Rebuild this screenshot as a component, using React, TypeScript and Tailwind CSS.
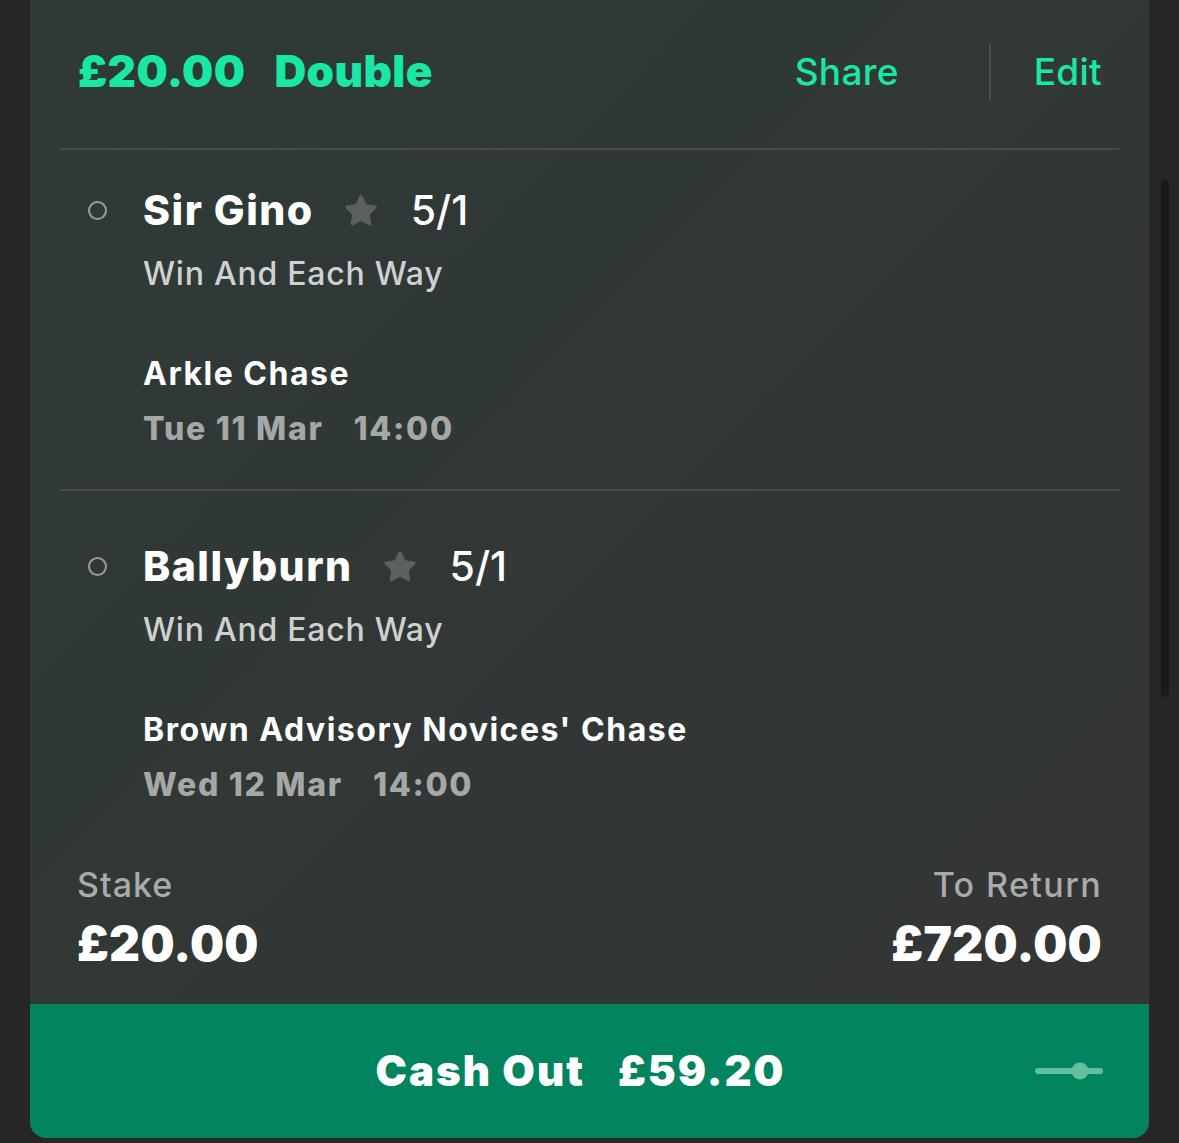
import { Star } from 'lucide-react';

type Leg = {
  horse: string;
  odds: string;
  market: string;
  race: string;
  day: string;
  time: string;
};

const legs: Leg[] = [
  { horse: 'Sir Gino', odds: '5/1', market: 'Win And Each Way', race: 'Arkle Chase', day: 'Tue 11 Mar', time: '14:00' },
  { horse: 'Ballyburn', odds: '5/1', market: 'Win And Each Way', race: "Brown Advisory Novices' Chase", day: 'Wed 12 Mar', time: '14:00' },
];

function LegRow({ leg, first }: { leg: Leg; first: boolean }) {
  return (
    <div className={first ? 'pt-[40px] pb-[44px]' : 'pt-[55px]'}>
      {/* runner line */}
      <div className="flex items-center h-[41px] pl-[58px] leading-none">
        <span className="w-[19px] h-[19px] rounded-full border-2 border-[#999c9b] mr-[36px] shrink-0" />
        <span className="text-[41px] font-extrabold tracking-[1.5px] text-white">{leg.horse}</span>
        <Star className="w-[36px] h-[36px] ml-[29px] text-[#5b615e]" fill="currentColor" strokeWidth={1} />
        <span className="text-[41px] font-medium text-white ml-[32px]">{leg.odds}</span>
      </div>
      <div className="pl-[113px]">
        <div className="mt-[27px] text-[32px] leading-none font-medium tracking-[0.75px] text-[#cfd1d0]">{leg.market}</div>
        <div className="mt-[68px] text-[32px] leading-none font-bold tracking-[1.5px] text-white">{leg.race}</div>
        <div className="mt-[23px] text-[32px] leading-none font-extrabold tracking-[1.7px] text-[#a6a8a7] flex gap-[30px]">
          <span>{leg.day}</span>
          <span>{leg.time}</span>
        </div>
      </div>
    </div>
  );
}

export default function App() {
  return (
    <div className="min-h-screen bg-[#262626] pl-[30px] pb-[6px] relative font-['Inter','Liberation_Sans',sans-serif]">
      <div className="w-[1119px] rounded-b-[16px] overflow-hidden bg-gradient-to-br from-[#2e3a37] to-[#343535]">
        {/* header */}
        <div className="h-[148px] pb-[6px] pl-[48px] pr-[47px] flex items-center justify-between leading-none">
          <div className="flex gap-[29px] text-[44px] font-black tracking-[0.4px] text-[#19e8a4]">
            <span>£20.00</span>
            <span>Double</span>
          </div>
          <div className="flex items-center text-[37px] font-medium tracking-[0.3px] text-[#19e8a4]">
            <span>Share</span>
            <span className="w-[2px] h-[57px] bg-[#4a4e4c] ml-[90px] mr-[43px]" />
            <span>Edit</span>
          </div>
        </div>
        <div className="mx-[30px] h-[2px] bg-[#474c4a]" />

        <LegRow leg={legs[0]} first />
        <div className="mx-[30px] h-[2px] bg-[#474c4a]" />
        <LegRow leg={legs[1]} first={false} />

        {/* stake / return */}
        <div className="pt-[67px] pb-[36px] pl-[47px] pr-[47px] flex justify-between">
          <div>
            <div className="text-[34px] leading-none font-medium tracking-[1px] text-[#a9abaa]">Stake</div>
            <div className="mt-[18px] text-[48px] leading-none font-black tracking-[0.3px] text-white">£20.00</div>
          </div>
          <div className="text-right">
            <div className="text-[34px] leading-none font-medium tracking-[1.4px] text-[#a9abaa]">To Return</div>
            <div className="mt-[18px] text-[48px] leading-none font-black tracking-[0.3px] text-white">£720.00</div>
          </div>
        </div>

        {/* cash out */}
        <div className="h-[134px] bg-[#02855e] flex items-center pl-[48px] pr-[46px]">
          <div className="flex-1 flex justify-center gap-[33px] text-[42px] leading-none font-black tracking-[2px] text-white pl-[48px]">
            <span>Cash Out</span>
            <span>£59.20</span>
          </div>
          <svg width="68" height="20" viewBox="0 0 68 20">
            <line x1="3" y1="10" x2="65" y2="10" stroke="#62c09e" strokeWidth="6" strokeLinecap="round" />
            <circle cx="45" cy="10" r="8.5" fill="#62c09e" />
          </svg>
        </div>
      </div>

      {/* scrollbar thumb */}
      <div className="absolute left-[1161px] top-[180px] w-[8px] h-[517px] rounded-full bg-[#1a1a1a]" />
    </div>
  );
}
